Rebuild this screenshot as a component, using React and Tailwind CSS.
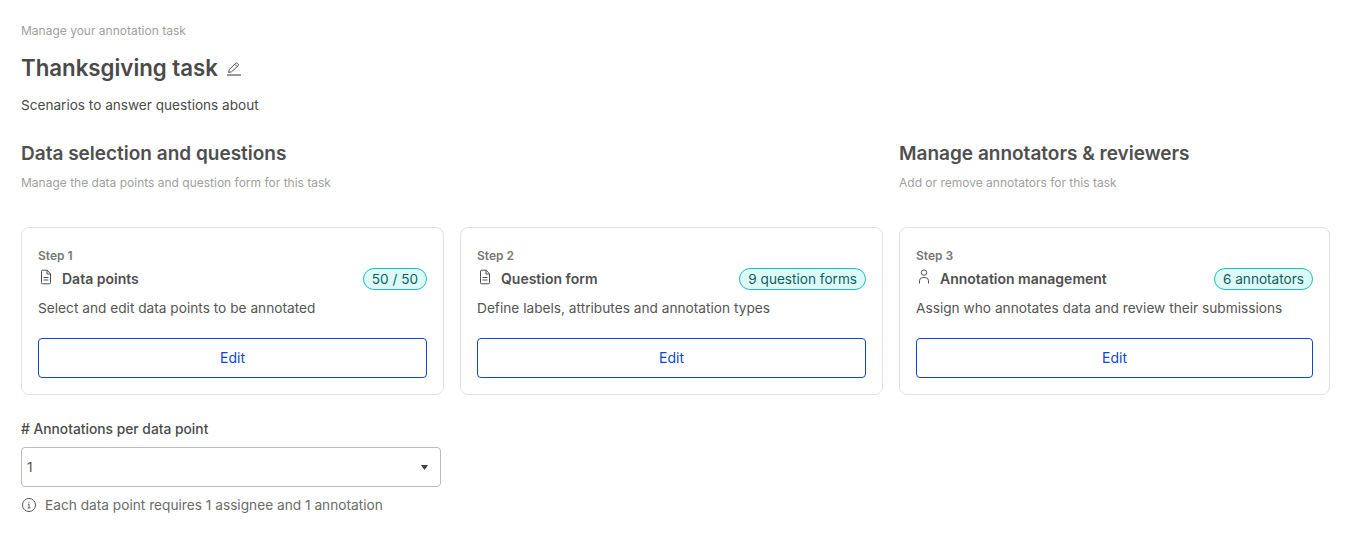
import React from 'react';

const DocIcon = () => (
    <svg width="16" height="16" viewBox="0 0 16 16" fill="none" stroke="#4f4f4f" strokeWidth="1" className="shrink-0">
        <path d="M3.5 2.2a1 1 0 0 1 1-1h4.7l3.3 3.6v9a1 1 0 0 1-1 1h-7a1 1 0 0 1-1-1z" />
        <path d="M9 1.4v3.6h3.4M5.6 8.5h4.8M5.6 11h4.8" />
    </svg>
);

const UserIcon = () => (
    <svg width="16" height="16" viewBox="0 0 16 16" fill="none" stroke="#4f4f4f" strokeWidth="1" className="shrink-0">
        <circle cx="8" cy="3.6" r="2.7" />
        <path d="M3.5 14.5v-2.7a3.2 3.2 0 0 1 3.2-3.2h2.6a3.2 3.2 0 0 1 3.2 3.2v2.7" />
    </svg>
);

const PencilIcon = () => (
    <svg width="16" height="16" viewBox="0 0 16 16" fill="none" stroke="#555555" strokeWidth="1">
        <path d="M2.6 12.4l.7-3L9.8 3.2a1 1 0 0 1 1.4 0l1 1a1 1 0 0 1 0 1.4L5.6 11.8z" />
        <path d="M8.8 4.2l2.4 2.4" />
        <path d="M1 15h14" strokeWidth="1.2" />
    </svg>
);

const InfoIcon = () => (
    <svg width="16" height="16" viewBox="0 0 16 16" fill="none" stroke="#555555" strokeWidth="1" className="shrink-0">
        <circle cx="8" cy="8" r="6.5" />
        <path d="M6.8 7.2H8v3.6M6.6 10.9h2.8" />
        <circle cx="7.9" cy="5" r="0.6" fill="#555555" stroke="none" />
    </svg>
);

const StepCard = ({ step, icon, title, badge, text, width }) => (
    <div className={`${width} shrink-0 h-[168px] bg-white rounded-lg border border-[#e2e2e2] px-4 pt-[20px]`}>
        <div className="text-xs leading-4 font-semibold text-[#777777]">{step}</div>
        <div className="flex items-center justify-between h-[24px] mt-[3px]">
            <div className="flex items-center gap-2">
                <span className="relative -top-[2px]">{icon}</span>
                <span className="text-sm font-semibold text-[#4f4f4f]">{title}</span>
            </div>
            <span className="h-[22px] flex items-center px-2 rounded-full border border-[#1fc0b8] bg-[#dcfafa] text-[13.6px] text-[#0f5f5c]">{badge}</span>
        </div>
        <p className="text-[13.7px] leading-5 text-[#555555] mt-[7px]">{text}</p>
        <button className="w-full h-[40px] mt-5 rounded border border-[#0f47d4] text-sm text-[#0f47d4] bg-white">Edit</button>
    </div>
);

export default function App() {
    return (
        <div className="min-h-[548px] bg-white px-[21px] pt-[23px] font-['Inter',sans-serif] antialiased">
            <p className="text-xs leading-4 text-[#a0a0a0]">Manage your annotation task</p>
            <div className="flex items-center gap-2 mt-[12px] h-[34px]">
                <h1 className="text-[22.25px] font-semibold text-[#4a4a4a]">Thanksgiving task</h1>
                <PencilIcon />
            </div>
            <p className="text-[13.6px] leading-5 text-[#4a4a4a] mt-[10px]">Scenarios to answer questions about</p>

            <div className="flex gap-4 mt-[25px]">
                <div className="w-[862px]">
                    <h2 className="text-[19px] leading-7 font-semibold text-[#4f4f4f]">Data selection and questions</h2>
                    <p className="text-xs leading-4 text-[#a0a0a0] mt-[7px]">Manage the data points and question form for this task</p>
                </div>
                <div>
                    <h2 className="text-[19px] leading-7 font-semibold text-[#4f4f4f]">Manage annotators &amp; reviewers</h2>
                    <p className="text-xs leading-4 text-[#a0a0a0] mt-[7px]">Add or remove annotators for this task</p>
                </div>
            </div>

            <div className="flex gap-4 mt-[36px]">
                <StepCard width="w-[423px]" step="Step 1" icon={<DocIcon />} title="Data points" badge="50 / 50" text="Select and edit data points to be annotated" />
                <StepCard width="w-[423px]" step="Step 2" icon={<DocIcon />} title="Question form" badge="9 question forms" text="Define labels, attributes and annotation types" />
                <StepCard width="w-[431px]" step="Step 3" icon={<UserIcon />} title="Annotation management" badge="6 annotators" text="Assign who annotates data and review their submissions" />
            </div>

            <label className="block text-[13.8px] leading-5 font-medium text-[#4a4a4a] mt-6">&#35; Annotations per data point</label>
            <div className="w-[420px] h-[40px] mt-2 flex items-center justify-between pl-[5px] pr-[12px] rounded border border-[#b9bcc4] text-[13.6px] text-[#555555]">
                <span>1</span>
                <svg width="7" height="5" viewBox="0 0 7 5"><path d="M0 0h7L3.5 5z" fill="#3c4048" /></svg>
            </div>
            <div className="flex items-center gap-2 mt-2 text-[13.7px] leading-5 text-[#6b6b6b]">
                <InfoIcon />
                <span>Each data point requires 1 assignee and 1 annotation</span>
            </div>
        </div>
    );
}
